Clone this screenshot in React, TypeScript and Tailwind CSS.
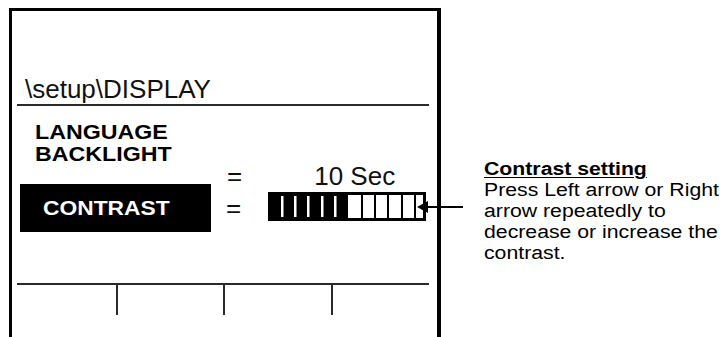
import React from 'react';

const whiteStripes = [13, 26, 39, 53, 66];
const blackSeparators = [93, 106, 119, 133, 146];

const ContrastBar: React.FC = () => (
  <svg width="158" height="29" viewBox="0 0 158 29" className="block">
    <rect x="0" y="0" width="158" height="29" fill="#fff" />
    <rect x="0" y="0" width="80" height="29" fill="#000" />
    {whiteStripes.map((x) => (
      <rect key={x} x={x} y="4" width="2.5" height="21" fill="#fff" />
    ))}
    {blackSeparators.map((x) => (
      <rect key={x} x={x} y="0" width="2" height="29" fill="#000" />
    ))}
    <rect x="1.5" y="1.5" width="155" height="26" fill="none" stroke="#000" strokeWidth="3" />
  </svg>
);

const App: React.FC = () => {
  return (
    <div className="relative w-[724px] h-[337px] overflow-hidden bg-white flex font-['Liberation_Sans',Arial,sans-serif] text-black">
      {/* display frame */}
      <div className="ml-[9px] mt-[8px] w-[432px] h-[329px] border-[3px] border-r-4 border-b-0 border-black flex flex-col">
        <div className="mt-[65px] pl-[13px] text-[26px] leading-[26px] text-[#111]">\setup\DISPLAY</div>
        <div className="mt-[2px] ml-[5px] mr-[8px] h-[2px] bg-[#2a2a2a]" />

        <div className="mt-[15px] ml-[23px] h-[43px] text-[20px] leading-[22px] font-bold">
          <div className="origin-left scale-x-[1.16]">LANGUAGE</div>
          <div className="origin-left scale-x-[1.16]">BACKLIGHT</div>
        </div>

        <div className="h-[20px] flex text-[26px] leading-[25px] text-[#111]">
          <span className="ml-[215px]">=</span>
          <span className="ml-[72px]">10 Sec</span>
        </div>

        <div className="h-[48px] flex items-center">
          <div className="ml-[8px] w-[191px] h-[48px] bg-black flex items-center pl-[23px]">
            <span className="text-white text-[20px] leading-[22px] font-bold origin-left scale-x-[1.14]">CONTRAST</span>
          </div>
          <span className="ml-[15px] text-[26px] leading-[25px] text-[#111]">=</span>
          <div className="ml-[27px] self-start mt-[8px]">
            <ContrastBar />
          </div>
        </div>

        {/* soft key row */}
        <div className="mt-[51px] ml-[5px] mr-[8px] h-[2px] bg-[#2a2a2a]" />
        <div className="ml-[5px] mr-[8px] h-[30px] flex">
          <div className="w-[101px] border-r-2 border-[#2a2a2a]" />
          <div className="w-[107px] border-r-2 border-[#2a2a2a]" />
          <div className="w-[108px] border-r-2 border-[#2a2a2a]" />
          <div className="flex-1" />
        </div>
      </div>

      {/* note */}
      <div className="ml-[43px] pt-[159px] text-[18px] leading-[21px] whitespace-nowrap">
        <div className="origin-left scale-x-[1.18]">
          <div className="font-bold underline underline-offset-2">Contrast setting</div>
          <div>Press Left arrow or Right</div>
          <div>arrow repeatedly to</div>
          <div>decrease or increase the</div>
          <div>contrast.</div>
        </div>
      </div>

      {/* pointer arrow */}
      <svg width="50" height="14" viewBox="0 0 50 14" className="absolute left-[415px] top-[200px]">
        <polygon points="2,7 13,1 13,13" fill="#000" />
        <rect x="12" y="6" width="36" height="2" fill="#000" />
      </svg>
    </div>
  );
};

export default App;
